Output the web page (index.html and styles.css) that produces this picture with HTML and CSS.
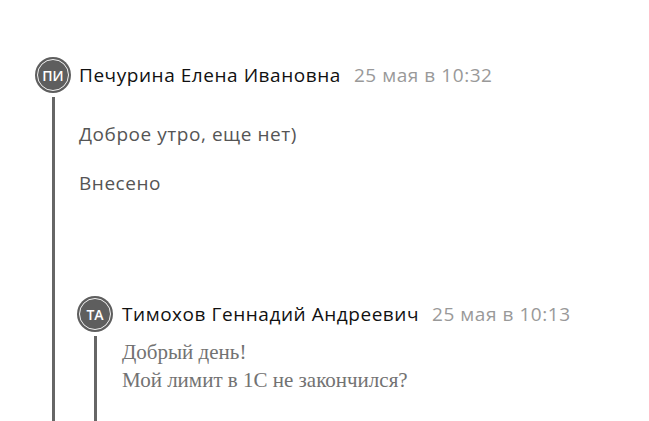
FILE: index.html
```html
<!DOCTYPE html>
<html lang="ru">
<head>
<meta charset="utf-8">
<link rel="stylesheet" href="styles.css">
</head>
<body>
<div class="thread">
  <div class="comment">
    <div class="avatar"><span>ПИ</span></div>
    <div class="head">
      <span class="name">Печурина Елена Ивановна</span>
      <span class="date">25 мая в 10:32</span>
    </div>
    <div class="line"></div>
    <div class="body">
      <p class="msg first">Доброе утро, еще нет)</p>
      <p class="msg">Внесено</p>
      <div class="comment nested">
        <div class="avatar"><span>ТА</span></div>
        <div class="head">
          <span class="name">Тимохов Геннадий Андреевич</span>
          <span class="date">25 мая в 10:13</span>
        </div>
        <div class="line"></div>
        <div class="body">
          <div class="quote">Добрый день!<br>Мой лимит в 1С не закончился?</div>
        </div>
      </div>
    </div>
  </div>
</div>
</body>
</html>
```
FILE: styles.css
```css
html, body {
  margin: 0;
  padding: 0;
  background: #fff;
  height: 100%;
  overflow: hidden;
}
.thread {
  box-sizing: border-box;
  height: 421px;
  overflow: hidden;
  padding: 57px 0 0 35px;
  font-family: "Open Sans", "Noto Sans", sans-serif;
  font-size: 19px;
  letter-spacing: 0.55px;
}
.comment {
  display: grid;
  grid-template-columns: 36px 1fr;
  column-gap: 8px;
}
.avatar {
  width: 36px;
  height: 36px;
  border-radius: 50%;
  background: #5e5e5e;
  display: flex;
  align-items: center;
  justify-content: center;
  box-sizing: border-box;
  position: relative;
}
.avatar::before {
  content: "";
  position: absolute;
  inset: 2px;
  border: 1.5px solid #f2f2f2;
  border-radius: 50%;
}
.avatar span {
  color: #fff;
  font-size: 14px;
  font-weight: 600;
  letter-spacing: 0;
}
.head {
  display: flex;
  align-items: center;
  gap: 13px;
  white-space: nowrap;
}
.name { color: #111; }
.date { color: #999; }
.line {
  width: 3px;
  background: #666;
  justify-self: center;
  margin-top: 4px;
  min-height: 400px;
}
.body {
  min-width: 0;
}
.msg {
  margin: 0;
  color: #555;
  line-height: 24px;
}
.msg.first { margin-top: 29px; margin-bottom: 25px; }
.nested {
  margin-top: 101px;
  margin-left: -2px;
  column-gap: 9px;
}
.quote {
  font-family: "Liberation Serif", serif;
  color: #727272;
  font-size: 21px;
  letter-spacing: 0;
  line-height: 28px;
  margin-top: 6px;
}
```
